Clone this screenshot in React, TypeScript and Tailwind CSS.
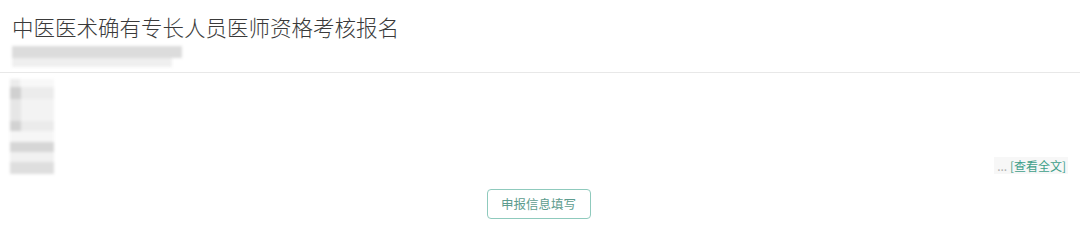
export default function App() {
  return (
    <div className="w-[1080px] h-[240px] bg-white overflow-hidden" style={{ fontFamily: '"Noto Sans CJK SC", "Noto Sans", sans-serif' }}>
      <div className="px-3 pt-[13px]">
        <div className="text-[21.5px] leading-[28px] text-[#3a3a3a] font-light">中医医术确有专长人员医师资格考核报名</div>
        <div className="mt-[5px] blur-[1.5px]">
          <div className="h-[12px] w-[170px] bg-[#dcdcdc]"></div>
          <div className="h-[9px] w-[160px] bg-[#efefef]"></div>
        </div>
      </div>
      <div className="mt-[5px] h-px bg-[#e8e8e8]"></div>
      <div className="flex">
        <div className="pl-[10px] pt-[6px] blur-[1.5px]">
          <div className="w-[44px] h-[8px] flex"><div className="w-[10px] bg-[#ececec]"></div><div className="flex-1 bg-[#f8f8f8]"></div></div>
          <div className="w-[44px] h-[12px] flex"><div className="w-[11px] bg-[#d0d0d0]"></div><div className="flex-1 bg-[#ececec]"></div></div>
          <div className="w-[44px] h-[22px] flex"><div className="w-[11px] bg-[#e6e6e6]"></div><div className="flex-1 bg-[#f3f3f3]"></div></div>
          <div className="w-[44px] h-[10px] flex"><div className="w-[11px] bg-[#d2d2d2]"></div><div className="flex-1 bg-[#ebebeb]"></div></div>
          <div className="w-[44px] h-[11px] bg-[#f6f6f6]"></div>
          <div className="w-[44px] h-[10px] bg-[#d6d6d6]"></div>
          <div className="w-[44px] h-[10px] bg-[#f1f1f1]"></div>
          <div className="w-[44px] h-[12px] bg-[#dedede]"></div>
        </div>
        <div className="flex-1 flex justify-end items-start pr-[12px] pt-[84px]">
          <div className="bg-[#f7f7f7] pl-[3px] pr-[2px] h-[17px] flex items-center text-[12px] leading-[17px]">
            <span className="text-[#b0b0b0]">...&nbsp;</span>
            <span className="text-[#3f9f8a]">[查看全文]</span>
          </div>
        </div>
      </div>
      <div className="flex justify-center mt-[15px]">
        <div className="mr-[3px] w-[104px] h-[30px] border border-[#8fcabd] rounded-[4px] flex items-center justify-center text-[12.5px] text-[#5d9c8e]">申报信息填写</div>
      </div>
    </div>
  );
}
